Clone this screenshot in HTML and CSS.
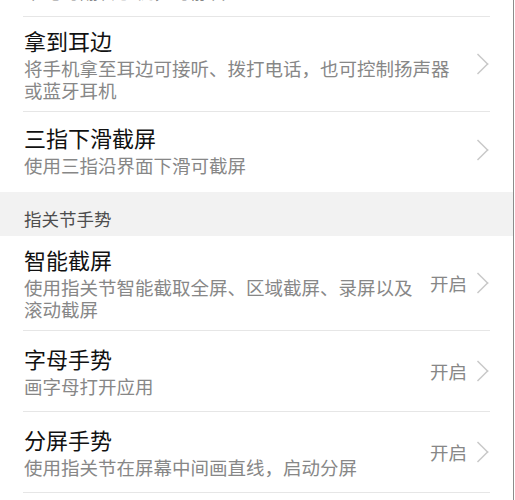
FILE: index.html
```html
<!DOCTYPE html>
<html lang="zh-CN">
<head>
<meta charset="utf-8">
<title>手势控制</title>
<link rel="stylesheet" href="styles.css">
</head>
<body>
<div class="page">
  <div class="group">
    <div class="row row-top">
      <div class="text">
        <div class="title">翻转静音</div>
        <div class="sub">来电时翻转手机，可静音</div>
      </div>
    </div>
    <div class="row">
      <div class="text">
        <div class="title">拿到耳边</div>
        <div class="sub">将手机拿至耳边可接听、拨打电话，也可控制扬声器或蓝牙耳机</div>
      </div>
      <span class="chev"></span>
    </div>
    <div class="row last">
      <div class="text">
        <div class="title">三指下滑截屏</div>
        <div class="sub">使用三指沿界面下滑可截屏</div>
      </div>
      <span class="chev"></span>
    </div>
  </div>
  <div class="section">指关节手势</div>
  <div class="group">
    <div class="row">
      <div class="text">
        <div class="title">智能截屏</div>
        <div class="sub wide">使用指关节智能截取全屏、区域截屏、录屏以及滚动截屏</div>
      </div>
      <span class="status">开启</span>
      <span class="chev"></span>
    </div>
    <div class="row">
      <div class="text">
        <div class="title">字母手势</div>
        <div class="sub wide">画字母打开应用</div>
      </div>
      <span class="status">开启</span>
      <span class="chev"></span>
    </div>
    <div class="row">
      <div class="text">
        <div class="title">分屏手势</div>
        <div class="sub wide">使用指关节在屏幕中间画直线，启动分屏</div>
      </div>
      <span class="status">开启</span>
      <span class="chev"></span>
    </div>
  </div>
</div>
</body>
</html>
```

FILE: styles.css
```css
html, body {
  margin: 0;
  padding: 0;
  background: #ffffff;
}

body {
  font-family: "Noto Sans CJK SC", "Noto Sans", sans-serif;
  overflow: hidden;
  height: 500px;
}

.page {
  width: 513px;
  height: 500px;
  border-right: 1px solid #8c8c8c;
  background: #ffffff;
  overflow: hidden;
}

.group {
  padding: 0 23px 0 23px;
  background: #ffffff;
}

.row {
  display: flex;
  align-items: center;
  box-sizing: border-box;
  min-height: 81px;
  padding: 9px 3px 10px 1px;
  border-bottom: 1px solid #e6e6e6;
}

.row.last {
  border-bottom: none;
  min-height: 80px;
  padding-bottom: 14px;
}

.row-top {
  margin-top: -64px;
}

.text {
  flex: 1;
  min-width: 0;
}

.title {
  font-size: 22px;
  line-height: 28px;
  color: #111111;
  margin-bottom: 3px;
}

.sub {
  font-size: 18.5px;
  line-height: 22px;
  color: #878787;
  padding-right: 20px;
}

.sub.wide {
  padding-right: 0;
}

.status {
  font-size: 18.5px;
  line-height: 22px;
  color: #878787;
  margin-left: 12px;
  margin-right: 6px;
  white-space: nowrap;
}

.chev {
  width: 9px;
  height: 9px;
  border-top: 1.5px solid #c9c9c9;
  border-right: 1.5px solid #c9c9c9;
  transform: rotate(45deg) scaleY(1.5) scaleX(1.5);
  transform-origin: center;
  margin-right: 4px;
  flex: none;
}

.section {
  background: #f2f2f2;
  height: 44px;
  box-sizing: border-box;
  padding: 16px 24px 0 24px;
  font-size: 17.5px;
  line-height: 22px;
  color: #4d4d4d;
}
```
